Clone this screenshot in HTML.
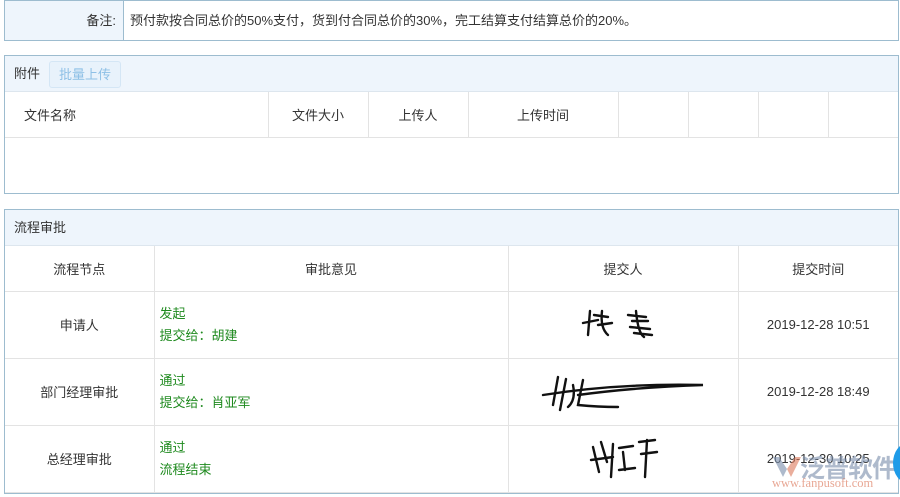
<!DOCTYPE html><html><head><meta charset="utf-8"><style>
*{margin:0;padding:0;box-sizing:border-box}
body{width:900px;height:497px;background:#fff;font-family:"Liberation Sans","Noto Sans CJK SC",sans-serif;font-size:13px;color:#333;position:relative;overflow:hidden}
.box{position:absolute;left:4px;width:895px;border:1px solid #9dbccf}
.hd{background:#eef5fc;height:36px;line-height:35px;padding-left:9px;border-bottom:1px solid #dde6ee}
table{border-collapse:collapse;width:100%;table-layout:fixed}
td{border-right:1px solid #e3e3e3;border-bottom:1px solid #e3e3e3;text-align:center}
td:last-child{border-right:none}
.g{color:#1f8a1f;text-align:left;padding-left:5px;line-height:22px}
</style></head><body>
<div class="box" style="top:0;height:41px;display:flex">
<div style="width:119px;background:#eef5fc;border-right:1px solid #9dbccf;text-align:right;padding-right:7px;line-height:39px">备注:</div>
<div style="padding-left:6px;line-height:39px">预付款按合同总价的50%支付，货到付合同总价的30%，完工结算支付结算总价的20%。</div>
</div>
<div class="box" style="top:55px;height:139px">
<div class="hd" style="position:relative">附件<span style="position:absolute;left:44px;top:5px;height:27px;line-height:25px;padding:0 9px;border:1px solid #d4e6f5;border-radius:3px;color:#8ec0e6;background:#e8f2fb">批量上传</span></div>
<table><tr style="height:45px"><td style="width:263px;text-align:left;padding-left:19px">文件名称</td><td style="width:100px">文件大小</td><td style="width:100px">上传人</td><td style="width:150px">上传时间</td><td style="width:70px"></td><td style="width:70px"></td><td style="width:70px"></td><td></td></tr></table>
</div>
<div class="box" style="top:209px;height:285px">
<div class="hd">流程审批</div>
<table>
<tr style="height:45px"><td style="width:149px">流程节点</td><td style="width:354px">审批意见</td><td style="width:230px">提交人</td><td>提交时间</td></tr>
<tr style="height:67px"><td>申请人</td><td class="g">发起<br>提交给：胡建</td><td><svg width="90" height="40" viewBox="0 0 90 40" fill="none" stroke="#111" stroke-width="2.4" stroke-linecap="round"><path d="M5 20 L20 17 M12 8 L10 32 M16 12 L30 14 M24 8 Q22 25 30 32 M20 22 L34 20"/><path d="M50 12 L68 14 M54 18 L70 18 M52 24 L72 26 M58 8 Q60 30 66 34 M56 30 L74 32"/></svg></td><td>2019-12-28 10:51</td></tr>
<tr style="height:67px"><td>部门经理审批</td><td class="g">通过<br>提交给：肖亚军</td><td><svg width="170" height="50" viewBox="0 0 170 50" fill="none" stroke="#111" stroke-width="2.4" stroke-linecap="round"><path d="M5 30 Q80 18 165 20 Q100 22 40 30"/><path d="M20 12 L15 40 M28 14 L22 45 M35 20 Q38 35 30 42 M45 15 L40 40 Q60 42 80 42"/></svg></td><td>2019-12-28 18:49</td></tr>
<tr style="height:67px"><td>总经理审批</td><td class="g">通过<br>流程结束</td><td><svg width="80" height="50" viewBox="0 0 80 50" fill="none" stroke="#111" stroke-width="2.4" stroke-linecap="round"><path d="M10 15 L16 40 M18 10 L24 30 M8 28 L30 25 M30 12 L28 45 M36 16 L50 14 M40 20 L42 38 M36 38 L52 36 M56 10 L72 8 M58 22 L74 20 M64 8 L62 45"/></svg></td><td>2019-12-30 10:25</td></tr>
</table>
</div>
<svg style="position:absolute;left:773px;top:455px" width="28" height="24" viewBox="0 0 28 24"><path d="M0 2 L10 22 L14 14 L6 2Z" fill="rgba(120,140,170,.6)"/><path d="M14 14 L22 2 L28 2 L18 22Z" fill="rgba(220,120,90,.6)"/></svg>
<div style="position:absolute;left:800px;top:449px;font-size:25px;color:rgba(120,140,170,.6);font-weight:bold;letter-spacing:-1px">泛普软件</div>
<div style="position:absolute;left:772px;top:476px;font-size:12.5px;color:rgba(220,120,90,.65);font-family:'Liberation Serif',serif">www.fanpusoft.com</div>
<div style="position:absolute;left:893px;top:443px;width:30px;height:40px;border-radius:50%;background:#1e9be8"></div>
</body></html>
